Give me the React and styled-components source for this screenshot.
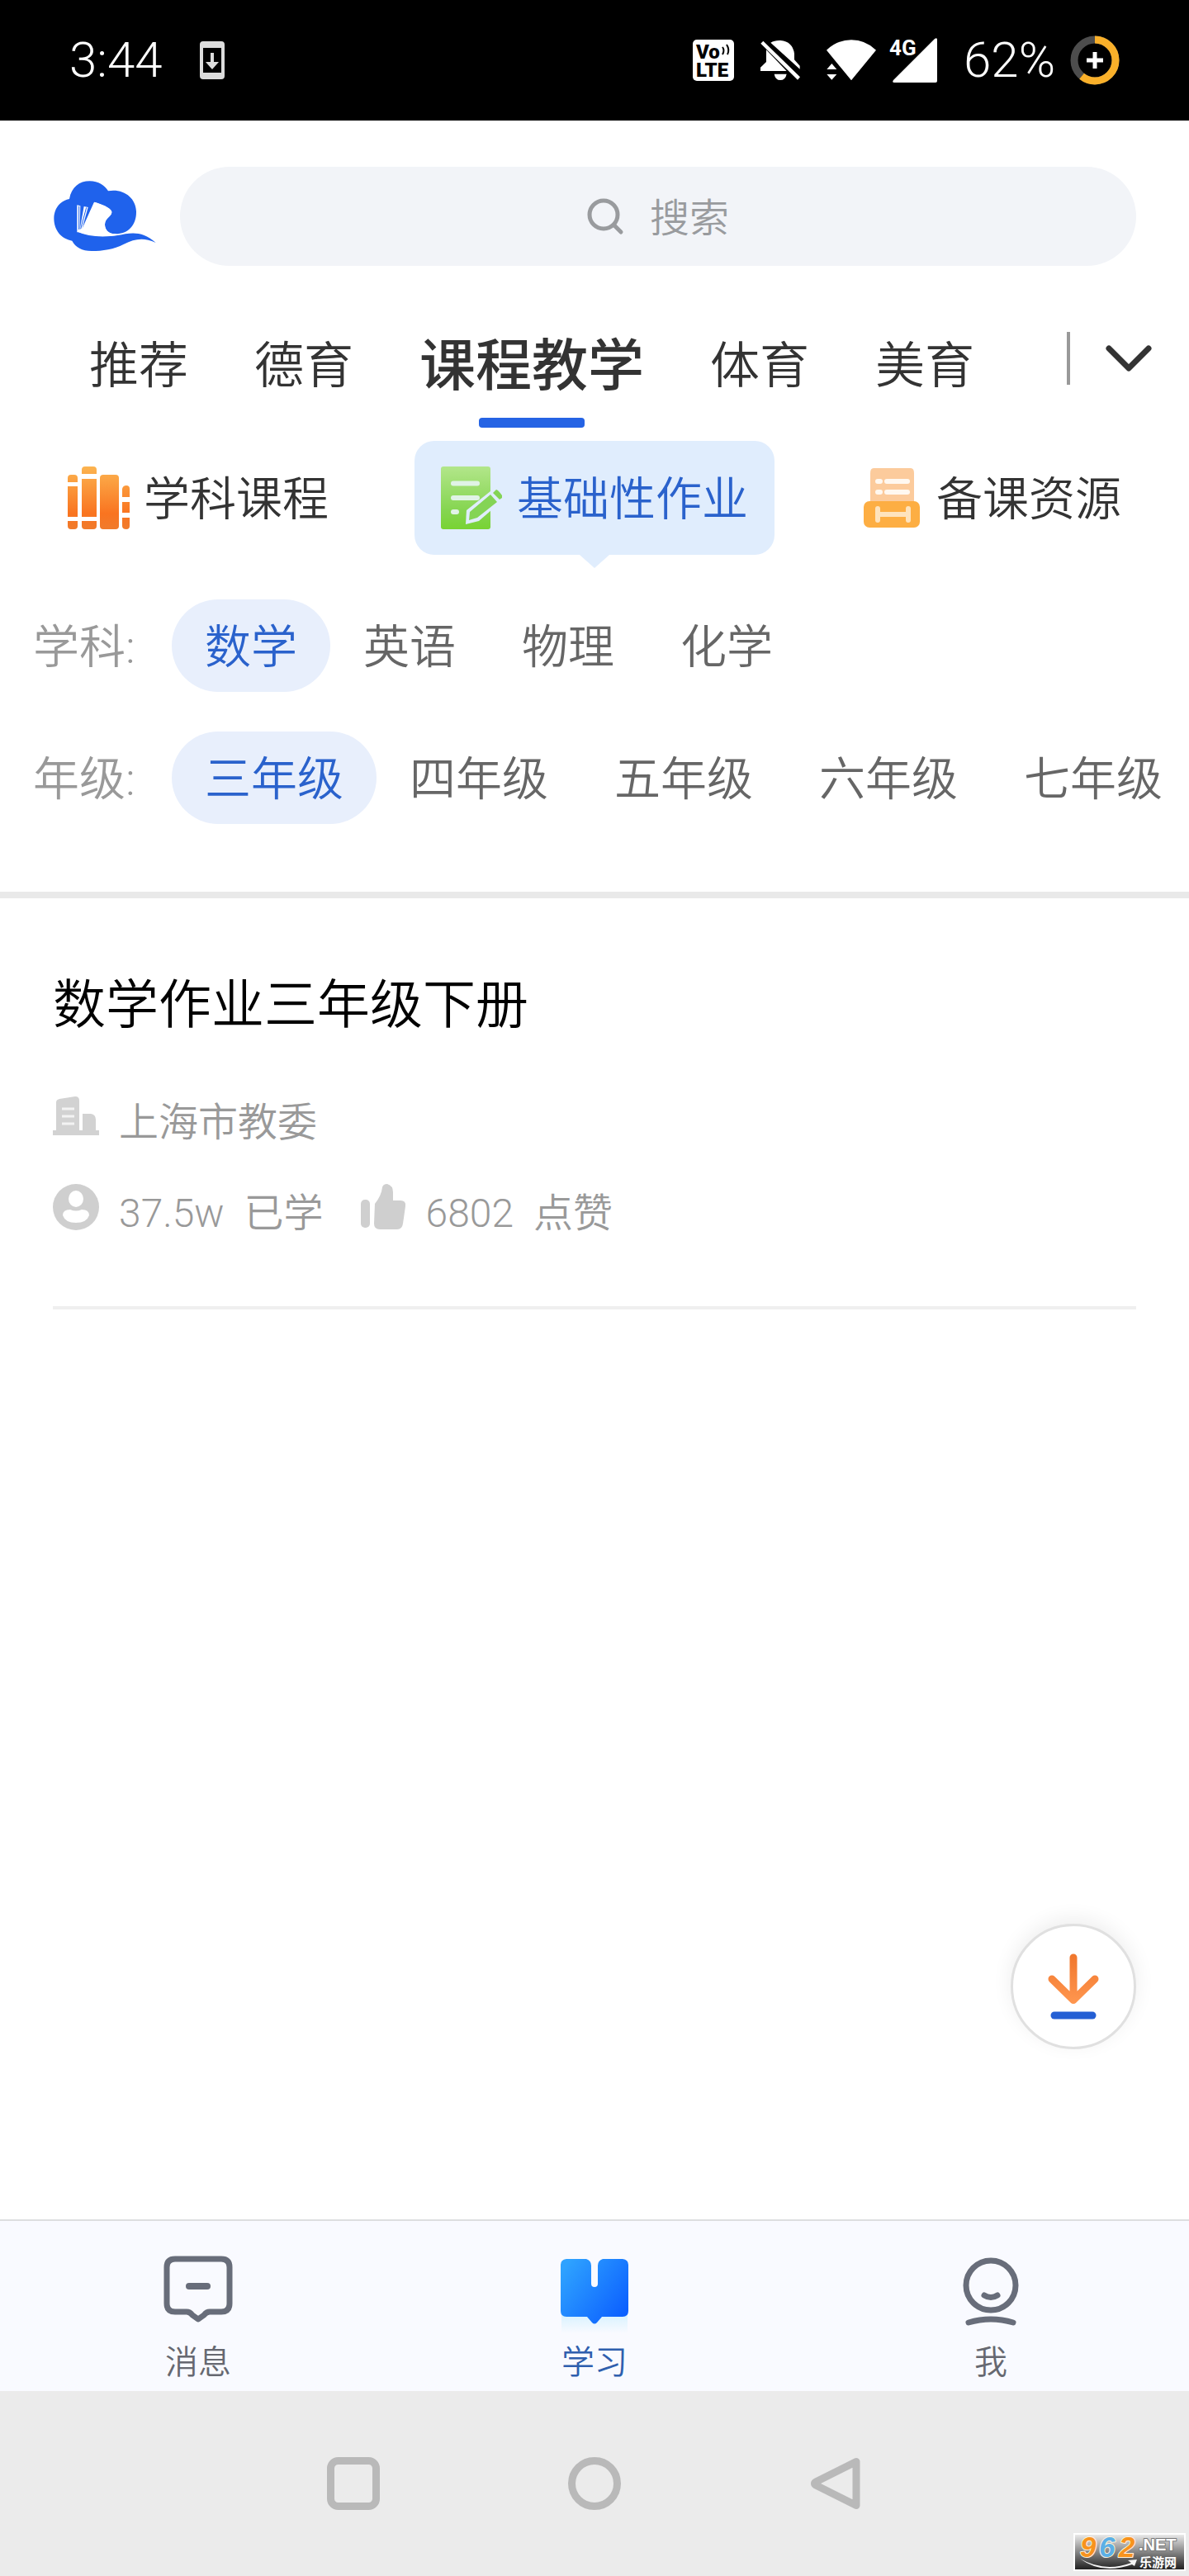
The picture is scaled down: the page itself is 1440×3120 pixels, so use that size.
import React, { useState } from "react";
import styled, { createGlobalStyle, css } from "styled-components";

const GlobalStyle = createGlobalStyle`
    * {
        box-sizing: border-box;
    }

    body {
        margin: 0;
        background: #ffffff;
        font-family: Roboto, "Noto Sans CJK SC", sans-serif;
        font-weight: 350;
    }

    button,
    input {
        margin: 0;
        padding: 0;
        border: none;
        background: none;
        font: inherit;
        color: inherit;
    }

    button {
        cursor: pointer;
    }

    svg {
        display: block;
        flex-shrink: 0;
        overflow: visible;
    }
`;

const Screen = styled.div`
    min-height: 100vh;
    display: flex;
    flex-direction: column;
    position: relative;
    overflow: hidden;
`;

const StatusBar = styled.header`
    height: 146px;
    padding: 0 84px;
    display: flex;
    align-items: center;
    justify-content: space-between;
    background: #000000;
    color: #ffffff;
    font-size: 60px;
    font-weight: 300;
    line-height: 76px;
`;

const StatusGroup = styled.div`
    display: flex;
    align-items: center;
    gap: ${({ $gap }) => $gap}px;
`;

const SearchRow = styled.div`
    padding: 56px 64px 0;
    display: flex;
    align-items: center;
    gap: 28px;
`;

const SearchBox = styled.label`
    flex: 1;
    height: 120px;
    display: flex;
    align-items: center;
    justify-content: center;
    gap: 32px;
    border-radius: 60px;
    background: #f2f4f8;
    color: #999b9e;
    font-size: 48px;
`;

const SearchInput = styled.input`
    width: 96px;
    padding-top: 4px;
    outline: none;

    &::placeholder {
        color: #999b9e;
        opacity: 1;
    }
`;

const ChannelRow = styled.div`
    padding: 78px 46px 0 108px;
    display: flex;
    align-items: flex-start;
    justify-content: space-between;
`;

const ChannelTabs = styled.nav`
    display: flex;
    gap: 80px;
`;

const ChannelTab = styled.button`
    display: flex;
    flex-direction: column;
    align-items: center;
    gap: 18px;
    color: #333333;
    font-size: ${({ $active }) => ($active ? 68 : 60)}px;
    font-weight: ${({ $active }) => ($active ? 500 : 350)};
    line-height: 88px;
    white-space: nowrap;

    &::after {
        content: "";
        width: 128px;
        height: 12px;
        border-radius: 4px;
        background: ${({ $active }) => ($active ? "#2563e4" : "transparent")};
    }

    &:not([aria-current])::after {
        width: 100%;
    }
`;

const ChannelMore = styled.div`
    height: 68px;
    display: flex;
    align-items: center;
    gap: 44px;
`;

const MoreDivider = styled.span`
    width: 4px;
    height: 64px;
    background: #999999;
`;

const CategoryRow = styled.nav`
    padding: 16px 50px 0;
    display: flex;
    justify-content: space-between;
`;

const Category = styled.button`
    height: 138px;
    padding: 0 32px;
    display: flex;
    align-items: center;
    gap: 20px;
    position: relative;
    border-radius: 24px;
    color: #333333;
    font-size: 56px;
    line-height: 84px;
    white-space: nowrap;

    ${({ $active }) =>
        $active &&
        css`
            background: #e0edfd;
            color: #2a62cc;

            &::after {
                content: "";
                position: absolute;
                top: 100%;
                left: 50%;
                margin-left: -18px;
                border: 18px solid transparent;
                border-top: 16px solid #e0edfd;
                border-bottom: none;
            }
        `}
`;

const CategoryName = styled.span`
    padding-top: 4px;
`;

const Filters = styled.section`
    padding: 54px 0 82px 40px;
    display: grid;
    gap: 48px;
    border-bottom: 8px solid #e9e9e9;
`;

const FilterRow = styled.div`
    min-width: 0;
    display: flex;
    align-items: center;
    font-size: 56px;
    line-height: 108px;
    white-space: nowrap;
`;

const FilterLabel = styled.span`
    width: 168px;
    padding-top: 4px;
    flex-shrink: 0;
    color: #999999;
`;

const FilterChip = styled.button`
    height: 112px;
    padding: 4px 40px 0;
    flex-shrink: 0;
    border-radius: 56px;
    background: ${({ $active }) => ($active ? "#e8effc" : "transparent")};
    color: ${({ $active }) => ($active ? "#2a62cc" : "#666666")};
`;

const Main = styled.main`
    flex: 1;
    padding: 0 64px;
`;

const Course = styled.article`
    padding: 82px 0 76px;
    border-bottom: 4px solid #efefef;
`;

const CourseTitle = styled.h2`
    margin: 0 0 58px;
    color: #000000;
    font-size: 64px;
    font-weight: 350;
    line-height: 96px;
`;

const CourseMeta = styled.div`
    display: flex;
    gap: 44px;
    color: #999999;
    font-size: 48px;
    line-height: 72px;

    & + & {
        margin-top: 38px;
    }
`;

const MetaItem = styled.span`
    display: flex;
    align-items: flex-start;
    gap: 24px;
`;

const DownloadButton = styled.button`
    width: 152px;
    height: 152px;
    display: flex;
    align-items: center;
    justify-content: center;
    position: absolute;
    right: 64px;
    bottom: 638px;
    border: 3px solid #e0e0e0;
    border-radius: 50%;
    background: #ffffff;
    box-shadow: 0 -6px 24px rgba(0, 0, 0, 0.07);
`;

const TabBar = styled.nav`
    height: 208px;
    display: grid;
    grid-template-columns: repeat(3, 1fr);
    border-top: 2px solid #dddee0;
    background: #f9faff;
`;

const TabLink = styled.a`
    padding-top: 42px;
    display: flex;
    flex-direction: column;
    align-items: center;
    gap: 18px;
    color: ${({ $active }) => ($active ? "#2f5fae" : "#666870")};
    font-size: 40px;
    line-height: 56px;
    text-decoration: none;
`;

const SystemNav = styled.div`
    height: 224px;
    display: flex;
    align-items: center;
    justify-content: center;
    gap: 228px;
    background: #ebebeb;
`;

const SiteBadge = styled.svg`
    position: absolute;
    right: 4px;
    bottom: 6px;
`;

const InstallIcon = () => (
    <svg width="30" height="46" viewBox="0 0 30 46">
        <path fill="#dcdcdc" fillRule="evenodd" d="M4 0h22a4 4 0 0 1 4 4v38a4 4 0 0 1-4 4H4a4 4 0 0 1-4-4V4a4 4 0 0 1 4-4ZM4 8v30h22V8Z" />
        <path fill="#dcdcdc" d="M13 14h4v11h6l-8 9-8-9h6Z" />
    </svg>
);

const VolteIcon = () => (
    <svg width="50" height="50" viewBox="0 0 50 50">
        <rect width="50" height="50" rx="5" fill="#fff" />
        <text x="4" y="23" fontFamily="Roboto" fontWeight="900" fontSize="24">Vo</text>
        <text x="4" y="45" fontFamily="Roboto" fontWeight="900" fontSize="24">LTE</text>
        <path d="M36 9q3 4 0 9M41 6q4 6 1 12" fill="none" stroke="#000" strokeWidth="2" />
    </svg>
);

const BellOffIcon = () => (
    <svg width="48" height="48" viewBox="279 60 144 144" fill="#fff">
        <path d="M316 68Q330 59 352 60Q396 64 402 108V130L422 152V164ZM300 94L374 171H279V158L300 138ZM329 182H374Q370 204 351 204Q333 204 329 182ZM289 62L423 193L414 203L280 71Z" />
    </svg>
);

const WifiIcon = () => (
    <svg width="60" height="50" viewBox="513 56 180 150" fill="#fff">
        <path d="M513 94Q552 57 603 57Q654 57 693 94L603 204ZM532 143L550 164H514ZM514 182H550L532 202Z" />
    </svg>
);

const SignalIcon = () => (
    <svg width="58" height="54" viewBox="0 0 58 54">
        <text x="0" y="21" fill="#fff" fontFamily="Roboto" fontWeight="700" fontSize="26">4G</text>
        <path fill="#fff" d="M55 1Q58-1 58 2V52Q58 54 56 54H6Q3 54 5 51Z" />
    </svg>
);

const BatteryIcon = () => (
    <svg width="60" height="60" viewBox="0 0 60 60" fill="none">
        <circle cx="30" cy="30" r="25" stroke="#4d4d4d" strokeWidth="9" />
        <circle cx="30" cy="30" r="25" stroke="#f9b02a" strokeWidth="9" pathLength="100" strokeDasharray="61 39" transform="rotate(-90 30 30)" />
        <path d="M30 20v20M20 30h20" stroke="#fff" strokeWidth="5" />
    </svg>
);

const CloudLogo = () => (
    <svg width="126" height="86" viewBox="24 29 378 258">
        <path
            fill="#1f62ec"
            d="M84 95C92 52 120 30 158 30C190 30 212 45 225 66C282 56 327 92 327 143C327 190 298 222 252 222C226 222 213 206 213 187C214 163 238 158 238 142C236 129 205 116 175 107L131 207L112 213C150 234 215 234 260 227C305 218 348 208 398 254C352 233 322 240 282 259C245 278 205 284 165 284C130 284 106 270 94 247C52 240 28 206 28 165C28 130 50 102 84 95Z"
        />
        <path fill="#fff" d="M112 117L124 120L122 206L137 122L152 125L129 208L135 212L112 216ZM174 106C200 112 238 128 238 143C238 160 213 163 213 188C213 206 226 222 250 222L262 226Q190 238 112 214L128 208Z" />
        <path fill="none" stroke="#1f62ec" strokeWidth="3" d="M119 121L119 206M146 126L125 204" />
    </svg>
);

const SearchIcon = () => (
    <svg width="44" height="42" viewBox="0 0 44 42" fill="none" stroke="#999b9e" strokeWidth="5" strokeLinecap="round">
        <circle cx="20" cy="19" r="17" />
        <path d="M33 32l8 8" />
    </svg>
);

const ChevronIcon = () => (
    <svg width="54" height="30" viewBox="0 0 54 30" fill="none" stroke="#333" strokeWidth="7" strokeLinecap="round" strokeLinejoin="round">
        <path d="M3 3l24 24L51 3" />
    </svg>
);

const BooksIcon = () => (
    <svg width="72" height="76" viewBox="-2 0 72 76">
        <defs>
            <linearGradient id="books" x1="0" y1="0" x2="0" y2="76" gradientUnits="userSpaceOnUse">
                <stop offset="0" stopColor="#fcb450" />
                <stop offset="0.75" stopColor="#f97420" />
                <stop offset="1" stopColor="#f07b2c" />
            </linearGradient>
        </defs>
        <g fill="url(#books)">
            <path d="M-2 19V14Q-2 10 2 10H6Q10 10 10 14V19ZM-2 24H10V61H-2ZM-2 66H10V72Q10 76 6 76H2Q-2 76-2 72Z" />
            <path d="M15 9V4Q15 0 19 0H29Q33 0 33 4V9ZM15 15H33V61H15ZM15 66H33V72Q33 76 29 76H19Q15 76 15 72Z" />
            <rect x="37" y="10" width="23" height="66" rx="4" />
            <path d="M64 37V27Q65 23 69 23Q73 23 73 27V37ZM64 43H73V56H64ZM64 62H73V72Q73 76 69 76Q64 76 64 72Z" />
        </g>
    </svg>
);

const HomeworkIcon = () => (
    <svg width="72" height="76" viewBox="0 0 72 76">
        <defs>
            <linearGradient id="paper" x1="0" y1="0" x2="0" y2="1">
                <stop offset="0" stopColor="#b2e68a" />
                <stop offset="0.7" stopColor="#85d550" />
                <stop offset="1" stopColor="#78d333" />
            </linearGradient>
        </defs>
        <rect width="60" height="76" rx="3" fill="url(#paper)" />
        <path d="M15 20.500h29M15 38h29M15 55h4" stroke="#e0f3e6" strokeWidth="6" strokeLinecap="round" />
        <path d="M31 53L65 26L77 39L46 66L30 70Z" fill="#e0edfd" />
        <path d="M35 55L60 34L68 43L44 62L34 65ZM63 32L67 28Q69 28 74 35L74 38L71 40Z" fill="#84d455" />
    </svg>
);

const ResourceIcon = () => (
    <svg width="72" height="76" viewBox="-2 0 72 76">
        <path d="M14 2H59Q63 2 63 8V46H10V8Q10 2 14 2Z" fill="#fccb9c" />
        <rect x="2" y="42" width="68" height="32" rx="7" fill="#fdae43" />
        <path d="M30 18h25M30 31h25M19 18h3M19 31h3" stroke="#fff8f0" strokeWidth="6" strokeLinecap="round" />
        <path d="M19 51v14M56 51v14M19 58h37" stroke="#fee3bd" strokeWidth="6" strokeLinecap="round" />
    </svg>
);

const BuildingIcon = () => (
    <svg width="56" height="56" viewBox="0 0 56 56">
        <path d="M4 48V11Q4 8 8 7L27 4Q32 4 32 9V48ZM36 25H46Q52 26 52 32V48H36Z" fill="#d2d2d2" />
        <path d="M0 48H56" stroke="#d2d2d2" strokeWidth="6" />
        <path d="M11 19h15M11 28h15M11 37h15" stroke="#f3f3f3" strokeWidth="3" />
    </svg>
);

const LearnerIcon = () => (
    <svg width="56" height="56" viewBox="0 0 56 56">
        <circle cx="28" cy="28" r="28" fill="#cfcfcf" />
        <ellipse cx="28" cy="18" rx="9" ry="10" fill="#fff" />
        <path d="M12 38Q12 31 21 31Q28 34 35 31Q44 31 44 38Q41 47 28 47Q15 47 12 38Z" fill="#fff" />
    </svg>
);

const LikeIcon = () => (
    <svg width="56" height="56" viewBox="0 0 56 56" fill="#cfcfcf">
        <rect x="1" y="19" width="11" height="34" rx="5" />
        <path d="M18 24Q26 14 27 4Q28 0 33 0Q40 2 40 10V20H49Q56 20 55 27L52 48Q51 55 45 55H24Q17 55 17 48Z" />
    </svg>
);

const DownloadIcon = () => (
    <svg width="62" height="80" viewBox="0 0 62 80" fill="none" strokeLinecap="round" strokeLinejoin="round">
        <defs>
            <linearGradient id="arrow" x1="0" y1="0" x2="0" y2="62" gradientUnits="userSpaceOnUse">
                <stop offset="0" stopColor="#f0762c" />
                <stop offset="1" stopColor="#ff9750" />
            </linearGradient>
        </defs>
        <path d="M31 5V56.500L5 31M31 56.500L57 31M31 5L31.100 56" stroke="url(#arrow)" strokeWidth="9" />
        <path d="M8 75H54" stroke="#245fd4" strokeWidth="9" />
    </svg>
);

const MessageIcon = () => (
    <svg width="84" height="84" viewBox="0 0 84 84" fill="none" stroke="#686d7a" strokeWidth="7" strokeLinejoin="round" strokeLinecap="round">
        <path d="M14 4H70Q80 4 80 14V58Q80 68 70 68H56Q52 68 49 72L42 77L35 72Q32 68 28 68H14Q4 68 4 58V14Q4 4 14 4Z" />
        <path d="M31 37H53" strokeWidth="8" />
    </svg>
);

const StudyIcon = () => (
    <svg width="84" height="84" viewBox="0 0 84 84">
        <defs>
            <linearGradient id="study" x1="0" y1="0.200" x2="1" y2="0.900">
                <stop offset="0" stopColor="#2ea2ff" />
                <stop offset="1" stopColor="#0a5cff" />
            </linearGradient>
            <linearGradient id="glow" x1="0" y1="0" x2="0" y2="1">
                <stop offset="0" stopColor="#d3f1ff" />
                <stop offset="1" stopColor="#f9faff" />
            </linearGradient>
        </defs>
        <rect x="2" y="68" width="80" height="26" fill="url(#glow)" />
        <path d="M8 4H32Q38 6 38 12V34Q38 38 42 38Q46 38 46 34V12Q46 6 52 4H76Q83 5 83 11V67Q83 74 76 74H51L45 81Q42 84 39 81L33 74H8Q1 74 1 67V11Q1 5 8 4Z" fill="url(#study)" />
    </svg>
);

const MeIcon = () => (
    <svg width="84" height="84" viewBox="0 0 84 84" fill="none" stroke="#686d7a" strokeWidth="7" strokeLinecap="round">
        <circle cx="42" cy="36" r="30" />
        <path d="M34 48Q42 53 50 48" />
        <path d="M15 81Q42 73 69 81" />
    </svg>
);

const channels = ["推荐", "德育", "课程教学", "体育", "美育"];

const categories = [
    { name: "学科课程", Icon: BooksIcon },
    { name: "基础性作业", Icon: HomeworkIcon },
    { name: "备课资源", Icon: ResourceIcon },
];

const filters = [
    { key: "subject", label: "学科:", options: ["数学", "英语", "物理", "化学"] },
    { key: "grade", label: "年级:", options: ["三年级", "四年级", "五年级", "六年级", "七年级"] },
];

const tabs = [
    { name: "消息", Icon: MessageIcon },
    { name: "学习", Icon: StudyIcon },
    { name: "我", Icon: MeIcon },
];

const App = () => {
    const [channel, setChannel] = useState("课程教学");
    const [category, setCategory] = useState("基础性作业");
    const [selected, setSelected] = useState({ subject: "数学", grade: "三年级" });

    const selectFilter = (key, option) => {
        setSelected((prev) => ({ ...prev, [key]: option }));
    };

    return (
        <Screen>
            <GlobalStyle />
            <StatusBar>
                <StatusGroup $gap={46}>
                    <span>3:44</span>
                    <InstallIcon />
                </StatusGroup>
                <StatusGroup $gap={32}>
                    <VolteIcon />
                    <BellOffIcon />
                    <StatusGroup $gap={16}>
                        <WifiIcon />
                        <SignalIcon />
                    </StatusGroup>
                    <StatusGroup $gap={18}>
                        <span>62%</span>
                        <BatteryIcon />
                    </StatusGroup>
                </StatusGroup>
            </StatusBar>

            <SearchRow>
                <CloudLogo />
                <SearchBox>
                    <SearchIcon />
                    <SearchInput type="text" placeholder="搜索" aria-label="搜索" />
                </SearchBox>
            </SearchRow>

            <ChannelRow>
                <ChannelTabs>
                    {channels.map((name) => (
                        <ChannelTab
                            key={name}
                            $active={name === channel}
                            aria-current={name === channel ? "page" : undefined}
                            onClick={() => setChannel(name)}
                        >
                            {name}
                        </ChannelTab>
                    ))}
                </ChannelTabs>
                <ChannelMore>
                    <MoreDivider />
                    <button aria-label="展开">
                        <ChevronIcon />
                    </button>
                </ChannelMore>
            </ChannelRow>

            <CategoryRow>
                {categories.map(({ name, Icon }) => (
                    <Category key={name} $active={name === category} onClick={() => setCategory(name)}>
                        <Icon />
                        <CategoryName>{name}</CategoryName>
                    </Category>
                ))}
            </CategoryRow>

            <Filters>
                {filters.map(({ key, label, options }) => (
                    <FilterRow key={key}>
                        <FilterLabel>{label}</FilterLabel>
                        {options.map((option) => (
                            <FilterChip
                                key={option}
                                $active={selected[key] === option}
                                onClick={() => selectFilter(key, option)}
                            >
                                {option}
                            </FilterChip>
                        ))}
                    </FilterRow>
                ))}
            </Filters>

            <Main>
                <Course>
                    <CourseTitle>数学作业三年级下册</CourseTitle>
                    <CourseMeta>
                        <MetaItem>
                            <BuildingIcon />
                            <span>上海市教委</span>
                        </MetaItem>
                    </CourseMeta>
                    <CourseMeta>
                        <MetaItem>
                            <LearnerIcon />
                            <span>37.5w</span>
                            <span>已学</span>
                        </MetaItem>
                        <MetaItem>
                            <LikeIcon />
                            <span>6802</span>
                            <span>点赞</span>
                        </MetaItem>
                    </CourseMeta>
                </Course>
            </Main>

            <DownloadButton aria-label="下载">
                <DownloadIcon />
            </DownloadButton>

            <TabBar>
                {tabs.map(({ name, Icon }) => (
                    <TabLink key={name} href="#" $active={name === "学习"}>
                        <Icon />
                        {name}
                    </TabLink>
                ))}
            </TabBar>

            <SystemNav>
                <button aria-label="最近任务">
                    <svg width="64" height="64" viewBox="0 0 64 64" fill="none" stroke="#b9b9b9" strokeWidth="9">
                        <rect x="4.500" y="4.500" width="55" height="55" rx="9" />
                    </svg>
                </button>
                <button aria-label="主屏幕">
                    <svg width="64" height="64" viewBox="0 0 64 64" fill="none" stroke="#b9b9b9" strokeWidth="9">
                        <circle cx="32" cy="32" r="27.500" />
                    </svg>
                </button>
                <button aria-label="返回">
                    <svg width="64" height="64" viewBox="0 0 64 64" fill="none" stroke="#b9b9b9" strokeWidth="9" strokeLinejoin="round">
                        <path d="M57 5.500V58.500L8 34Q5 32 8 30Z" />
                    </svg>
                </button>
            </SystemNav>

            <SiteBadge width="136" height="46" viewBox="0 0 136 46">
                <defs>
                    <linearGradient id="badge" x1="0" y1="0" x2="0" y2="1">
                        <stop offset="0" stopColor="#eeeeee" />
                        <stop offset="1" stopColor="#1c1c1c" />
                    </linearGradient>
                </defs>
                <rect x="1" y="1" width="134" height="44" fill="url(#badge)" stroke="#fff" strokeWidth="2" />
                <g fontFamily="Liberation Sans" fontWeight="700" paintOrder="stroke" strokeLinejoin="round">
                    <g fontSize="35" fontStyle="italic" stroke="#fff3dd" strokeWidth="2">
                        <text x="8" y="29" fill="#f7931e">9</text>
                        <text x="31" y="29" fill="#5cb0e6">6</text>
                        <text x="55" y="29" fill="#f7931e">2</text>
                    </g>
                    <text x="79" y="21" fontSize="20" fill="#fff" stroke="#777" strokeWidth="2">.NET</text>
                    <text x="80" y="41" fontSize="15" fill="#fff" fontFamily="Noto Sans CJK SC">乐游网</text>
                </g>
                <path d="M8 31Q38 48 70 36L66 33L77 32L74 40L71 38Q35 51 8 31Z" fill="#f4f4f4" />
            </SiteBadge>
        </Screen>
    );
};

export default App;
